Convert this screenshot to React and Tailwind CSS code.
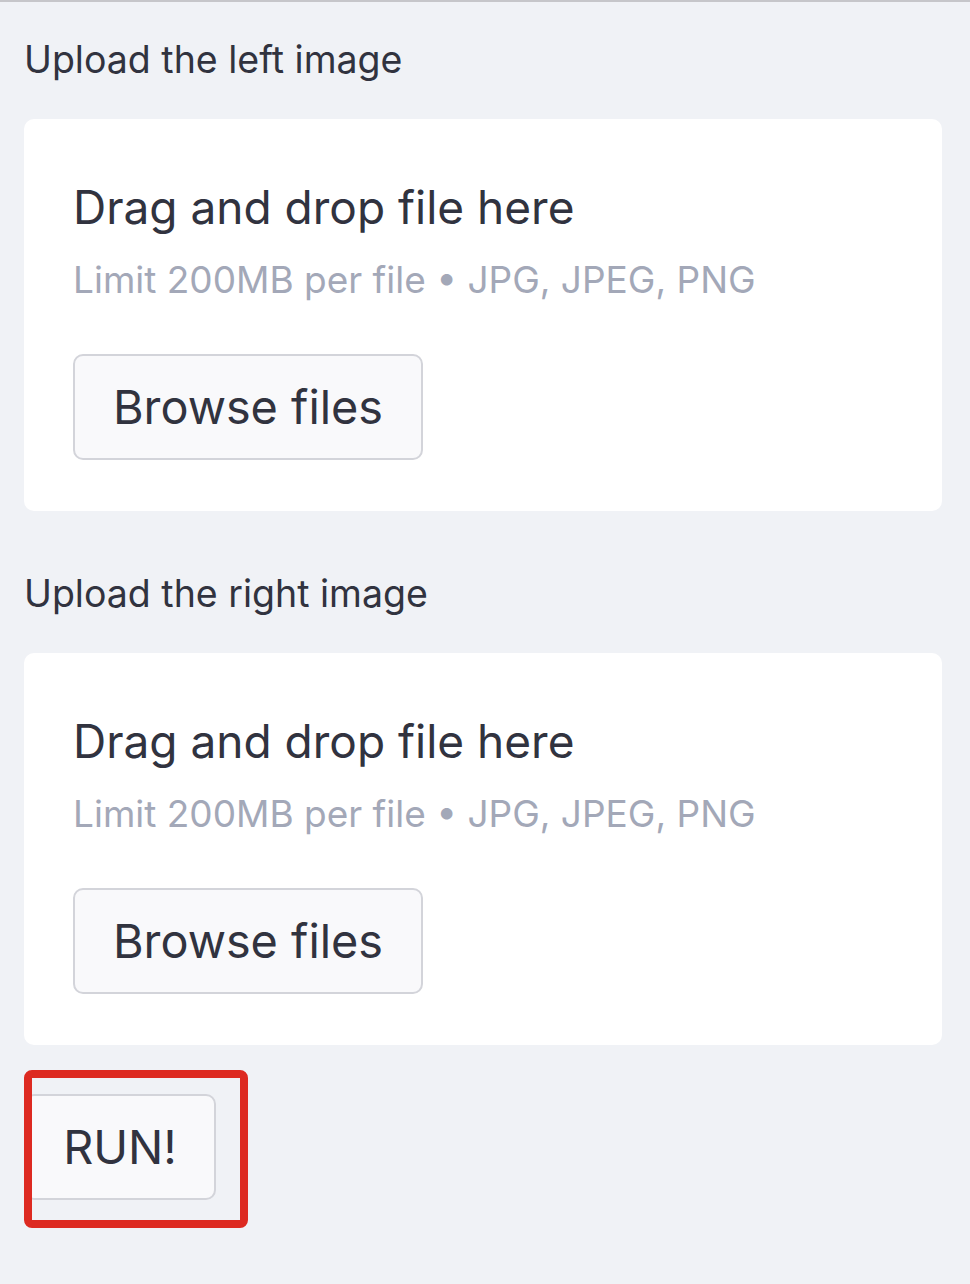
import { useState } from "react";

function Uploader({ label, first }) {
    return (
        <div>
            <p
                className={`text-[37.5px] leading-[48px] text-[#31333f] pb-[35px] ${
                    first ? "pt-[34px]" : "pt-[59px]"
                }`}
            >
                {label}
            </p>
            <div className="bg-white rounded-[10px] pl-[49px] pt-[60px] pb-[51px]">
                <p className="text-[46px] leading-[56px] text-[#31333f]">
                    Drag and drop file here
                </p>
                <p className="text-[37px] leading-[44px] text-[#a3a8b8] mt-[23px]">
                    Limit 200MB per file • JPG, JPEG, PNG
                </p>
                <button className="block mt-[52px] w-[350px] h-[106px] text-[46.8px] text-[#31333f] bg-[#f9f9fb] border-2 border-[#d3d4da] rounded-[10px]">
                    Browse files
                </button>
            </div>
        </div>
    );
}

export default function App() {
    const [ran, setRan] = useState(false);

    return (
        <div
            className="min-h-screen bg-[#f0f2f6] border-t-2 border-[#c6c6ca] pl-[24px] pr-[28px]"
            style={{ fontFamily: "Inter, 'Noto Sans', sans-serif" }}
        >
            <Uploader label="Upload the left image" first />
            <Uploader label="Upload the right image" />

            <div className="relative mt-[49px] w-fit">
                <button
                    className="block w-[192px] h-[106px] text-[46.8px] text-[#31333f] bg-[#f9f9fb] border-2 border-[#d3d4da] rounded-[10px]"
                    onClick={() => setRan(!ran)}
                >
                    RUN!
                </button>
                <div className="absolute left-0 -top-[24px] w-[224px] h-[158px] border-[8px] border-[#dd2a21] rounded-[8px] pointer-events-none" />
            </div>
        </div>
    );
}
